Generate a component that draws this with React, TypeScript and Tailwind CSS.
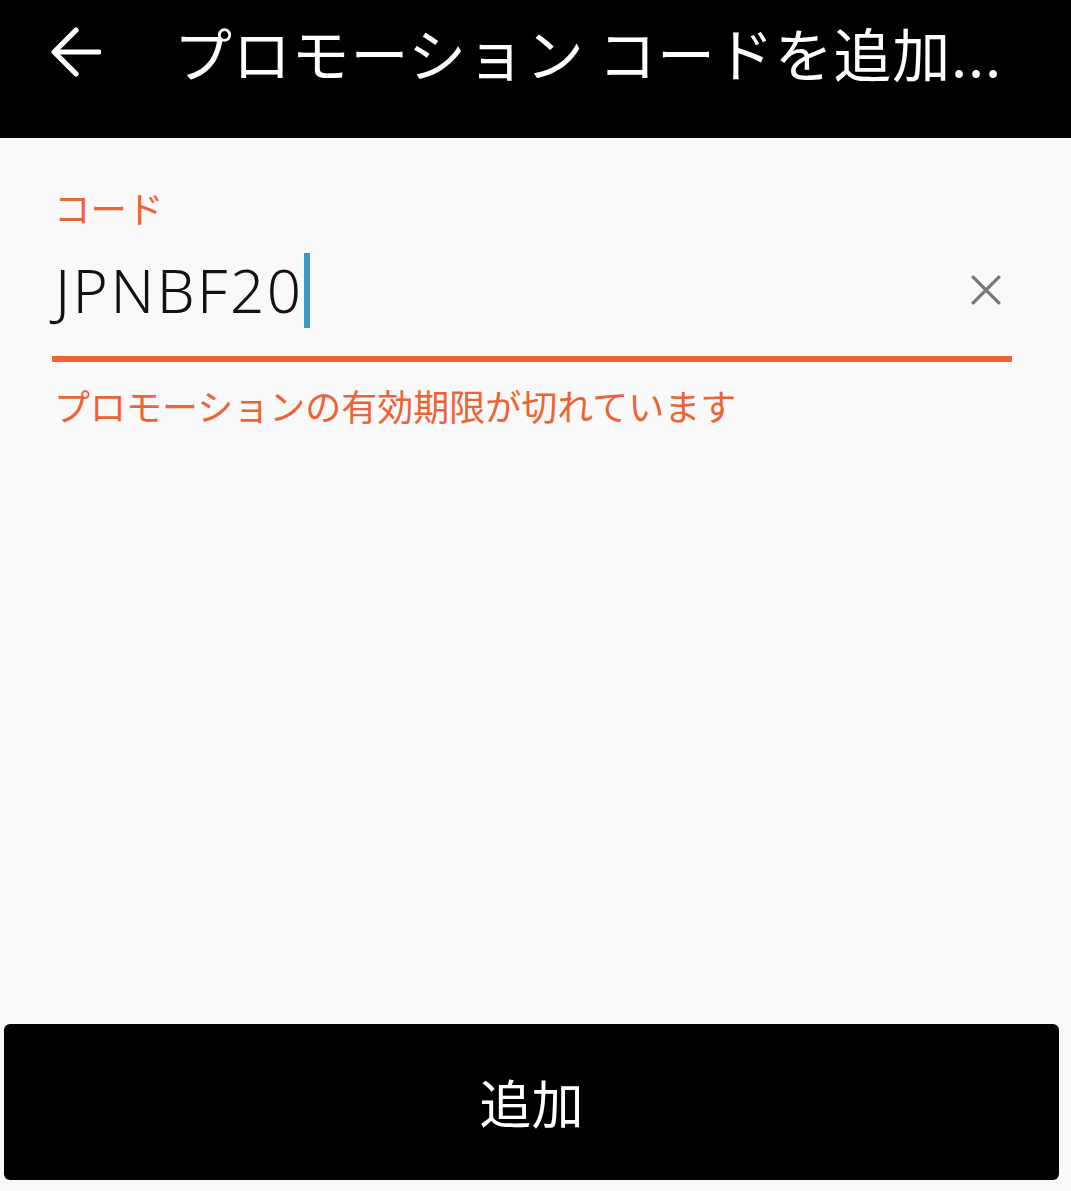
export default function App() {
  return (
    <div className="flex min-h-[1191px] flex-col bg-[#f9f9f9] font-['Noto_Sans_CJK_JP',sans-serif]">
      <header className="flex h-[138px] shrink-0 items-center bg-black pb-[34px]">
        <button className="ml-[51px] flex h-[50px] w-[50px] items-center justify-center text-white">
          <svg viewBox="0 0 48 48" width="50" height="50" fill="none" stroke="currentColor" strokeWidth="5" strokeLinecap="round" strokeLinejoin="round">
            <path d="M46 24H4" />
            <path d="M24 3L3 24l21 21" />
          </svg>
        </button>
        <h1 className="ml-[73px] whitespace-nowrap text-[58px] leading-none tracking-[0.8px] text-white">
          プロモーション コードを追加...
        </h1>
      </header>

      <main className="flex flex-1 flex-col pl-[52px] pr-[59px] pt-[40px]">
        <label className="pl-[2px] text-[36.5px] leading-[60px] text-[#ec6436]">コード</label>
        <div className="mt-[12px] flex items-center border-b-[6px] border-[#ec6436] pb-[26px]">
          <div className="flex flex-1 items-center">
            <span className="ml-[3px] font-['Noto_Sans',sans-serif] text-[60px] font-light leading-[80px] tracking-[2.5px] text-[#111]">
              JPNBF20
            </span>
            <span className="h-[75px] w-[6px] bg-[#3a9ac4]" />
          </div>
          <button className="mr-[8px] flex h-[36px] w-[36px] items-center justify-center text-[#777]">
            <svg viewBox="0 0 32 32" width="34" height="34" stroke="currentColor" strokeWidth="3">
              <path d="M3 3l26 26M29 3L3 29" />
            </svg>
          </button>
        </div>
        <p className="mt-[18px] pl-[2px] text-[36px] leading-[50px] text-[#ec6436]">
          プロモーションの有効期限が切れています
        </p>
      </main>

      <div className="px-[4px] pb-[11px]">
        <button className="flex h-[156px] w-[1055px] items-center justify-center rounded-[6px] bg-black text-[52px] text-white">
          追加
        </button>
      </div>
    </div>
  );
}
